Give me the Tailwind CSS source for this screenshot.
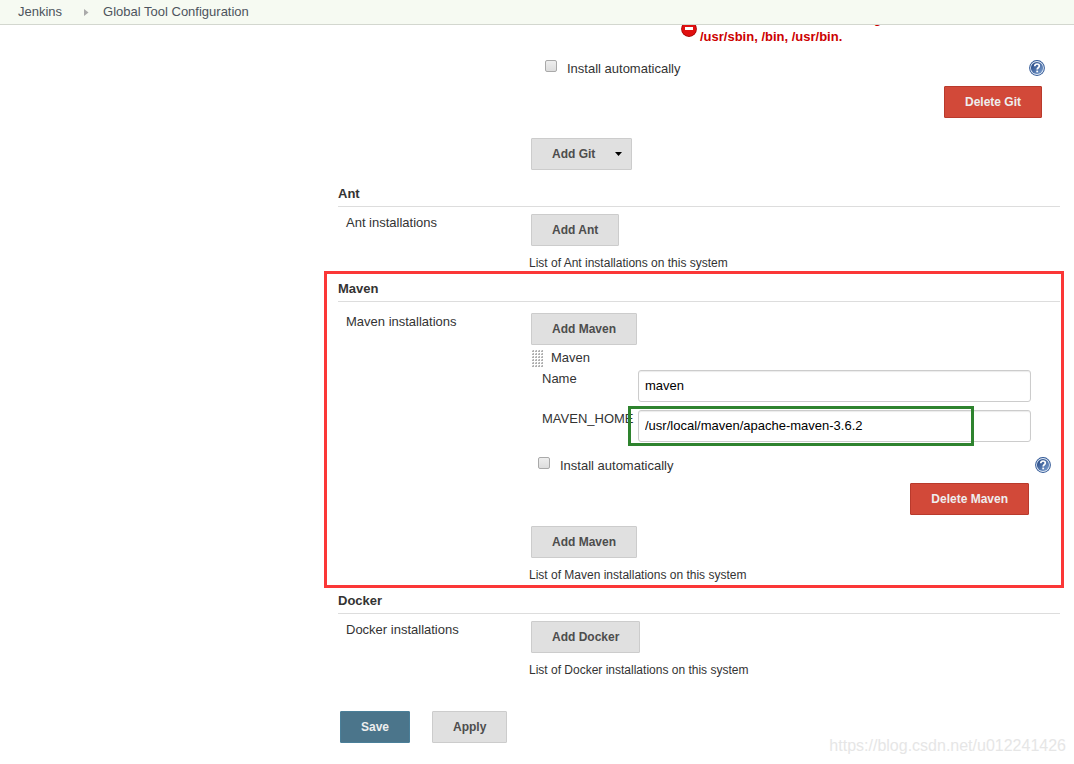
<!DOCTYPE html>
<html lang="en">
<head>
<meta charset="utf-8">
<title>Global Tool Configuration [Jenkins]</title>
<script src="https://cdn.jsdelivr.net/npm/@tailwindcss/browser@4"></script>
</head>
<body class="relative min-h-screen bg-white font-['Liberation_Sans',Arial,sans-serif] text-[13px] leading-[18px] text-[#333]">
<svg class="absolute size-0" aria-hidden="true">
  <defs>
    <linearGradient id="helpFill" x1="0" y1="0" x2="1" y2="1"><stop offset="0" stop-color="#1d3f7c"/><stop offset="1" stop-color="#7fa3d4"/></linearGradient>
    <pattern id="dots" width="3" height="3" patternUnits="userSpaceOnUse"><rect width="2" height="2" fill="#b0b0b0"/><rect width="1" height="1" fill="#dedede"/></pattern>
  </defs>
  <symbol id="help" viewBox="0 0 16 16">
    <circle cx="8" cy="8" r="7.9" fill="#2f5796"/>
    <circle cx="8" cy="8" r="6.9" fill="#e4ecf6"/>
    <circle cx="8" cy="8" r="6.1" fill="url(#helpFill)"/>
    <path d="M5.7 6.3C5.8 4.7 6.7 4 8 4s2.3.8 2.3 2c0 1.700-2.100 1.800-2.100 3.400" fill="none" stroke="#fff" stroke-width="1.700"/>
    <rect x="7.300" y="10.600" width="1.800" height="1.700" fill="#fff"/>
  </symbol>
</svg>

<header class="relative z-10 border-b border-[#d3d7cf] bg-[#f6faf2]">
  <nav class="flex h-6 items-center pl-[18px] text-[#4d545d]" aria-label="Breadcrumb">
    <a href="#">Jenkins</a>
    <svg class="mt-px mr-[14px] ml-[22px] h-[7px] w-[5px]" viewBox="0 0 5 7" aria-hidden="true"><path d="M0 0l4.500 3.500L0 7z" fill="#aaa"/></svg>
    <a href="#">Global Tool Configuration</a>
  </nav>
</header>

<main class="-mt-[15px] pr-[14px] pl-[338px]">
  <form>
    <section class="pl-[191px]">
      <div class="flex pl-[152px] font-bold text-[#c00]">
        <svg class="mt-[11px] mr-[3px] h-4 w-4 shrink-0" viewBox="0 0 16 16" aria-hidden="true"><circle cx="8" cy="8" r="7.900" fill="#a40000"/><circle cx="8" cy="8" r="7.100" fill="#e01010"/><rect x="4" y="6" width="8" height="3" fill="#fff"/></svg>
        <p>There's no such executable git in PATH: /sbin,<br>/usr/sbin, /bin, /usr/bin.</p>
      </div>
      <div class="mt-[14px] flex items-start justify-between pr-[15px] pl-4">
        <label class="flex"><input type="checkbox" class="mr-[10px] h-3 w-3 appearance-none rounded-[2px] border border-[#a9a9a9] bg-gradient-to-b from-[#eee] to-[#ddd]">Install automatically</label>
        <button type="button" aria-label="Help"><svg class="h-4 w-4"><use href="#help"/></svg></button>
      </div>
      <div class="mt-2 flex justify-end pr-[18px]">
        <button type="button" class="h-8 rounded-[1px] border border-[#b93a2c] bg-[#d24939] px-5 text-xs font-bold text-[#eee]">Delete Git</button>
      </div>
      <button type="button" class="mt-5 ml-0.5 flex h-8 items-center rounded-[1px] border border-[#ccc] bg-[#e0e0e0] pr-[9px] pl-5 text-xs font-bold text-[#4d4d4d]">Add Git
        <svg class="ml-5 h-1 w-[7px]" viewBox="0 0 7 4" aria-hidden="true"><path d="M0 0h7L3.500 4z" fill="#000"/></svg>
      </button>
    </section>

    <section class="mt-[15px]">
      <h2 class="border-b border-[#ddd] pb-[3px] font-bold">Ant</h2>
      <div class="grid grid-cols-[191px_1fr] pt-[7px]">
        <div class="pl-2">Ant installations</div>
        <div>
          <button type="button" class="ml-0.5 block h-8 rounded-[1px] border border-[#ccc] bg-[#e0e0e0] px-5 text-xs font-bold text-[#4d4d4d]">Add Ant</button>
          <p class="mt-2 text-xs leading-[18px]">List of Ant installations on this system</p>
        </div>
      </div>
    </section>

    <section class="relative mt-2">
      <h2 class="border-b border-[#ddd] pb-[3px] font-bold">Maven</h2>
      <div class="grid grid-cols-[191px_1fr] pt-[11px]">
        <div class="pl-2">Maven installations</div>
        <div>
          <button type="button" class="ml-0.5 block h-8 rounded-[1px] border border-[#ccc] bg-[#e0e0e0] px-5 text-xs font-bold text-[#4d4d4d]">Add Maven</button>
          <div class="mt-1 flex pl-[3px]">
            <svg class="mt-px mr-2 h-[17px] w-[11px]" aria-hidden="true"><rect width="11" height="17" fill="url(#dots)"/></svg>Maven
          </div>
          <div class="mt-[3px] flex pr-[29px] pl-[13px]">
            <label for="name" class="w-24 shrink-0">Name</label>
            <input id="name" value="maven" class="h-8 min-w-0 flex-1 rounded-[3px] border border-[#ccc] px-1.5 pb-0.5 text-black shadow-[inset_0_1px_1px_rgba(0,0,0,0.08)]">
          </div>
          <div class="relative mt-2 flex pr-[29px] pl-[13px]">
            <label for="home" class="w-24 shrink-0">MAVEN_HOME</label>
            <input id="home" value="/usr/local/maven/apache-maven-3.6.2" class="h-8 min-w-0 flex-1 rounded-[3px] border border-[#ccc] px-1.5 pb-0.5 text-black shadow-[inset_0_1px_1px_rgba(0,0,0,0.08)]">
            <div class="pointer-events-none absolute -top-1 right-[86px] -bottom-1 left-[99px] border-3 border-[#2e832e]"></div>
          </div>
          <div class="mt-[15px] flex items-start justify-between pr-[9px] pl-[9px]">
            <label class="flex"><input type="checkbox" class="mr-[10px] h-3 w-3 appearance-none rounded-[2px] border border-[#a9a9a9] bg-gradient-to-b from-[#eee] to-[#ddd]">Install automatically</label>
            <button type="button" aria-label="Help"><svg class="h-4 w-4"><use href="#help"/></svg></button>
          </div>
          <div class="mt-2 flex justify-end pr-[31px]">
            <button type="button" class="h-8 rounded-[1px] border border-[#b93a2c] bg-[#d24939] px-5 text-xs font-bold text-[#eee]">Delete Maven</button>
          </div>
          <button type="button" class="mt-[11px] ml-0.5 block h-8 rounded-[1px] border border-[#ccc] bg-[#e0e0e0] px-5 text-xs font-bold text-[#4d4d4d]">Add Maven</button>
          <p class="mt-2 text-xs leading-[18px]">List of Maven installations on this system</p>
        </div>
      </div>
      <div class="pointer-events-none absolute -top-[9px] -right-1 -bottom-1 -left-[14px] border-3 border-[#fb3737]"></div>
    </section>

    <section class="mt-2">
      <h2 class="border-b border-[#ddd] pb-[3px] font-bold">Docker</h2>
      <div class="grid grid-cols-[191px_1fr] pt-[7px]">
        <div class="pl-2">Docker installations</div>
        <div>
          <button type="button" class="ml-0.5 block h-8 rounded-[1px] border border-[#ccc] bg-[#e0e0e0] px-5 text-xs font-bold text-[#4d4d4d]">Add Docker</button>
          <p class="mt-2 text-xs leading-[18px]">List of Docker installations on this system</p>
        </div>
      </div>
    </section>

    <div class="mt-8 flex gap-[22px] pl-0.5">
      <button type="submit" class="h-8 rounded-[1px] border border-[#4a7f99] bg-[#4b758b] px-5 text-xs font-bold text-[#eee]">Save</button>
      <button type="button" class="h-8 rounded-[1px] border border-[#ccc] bg-[#e0e0e0] px-5 text-xs font-bold text-[#4d4d4d]">Apply</button>
    </div>
  </form>
</main>
<div class="pointer-events-none absolute right-2 bottom-2 text-base leading-5 text-[#e6e6e6]">https://blog.csdn.net/u012241426</div>
</body>
</html>
